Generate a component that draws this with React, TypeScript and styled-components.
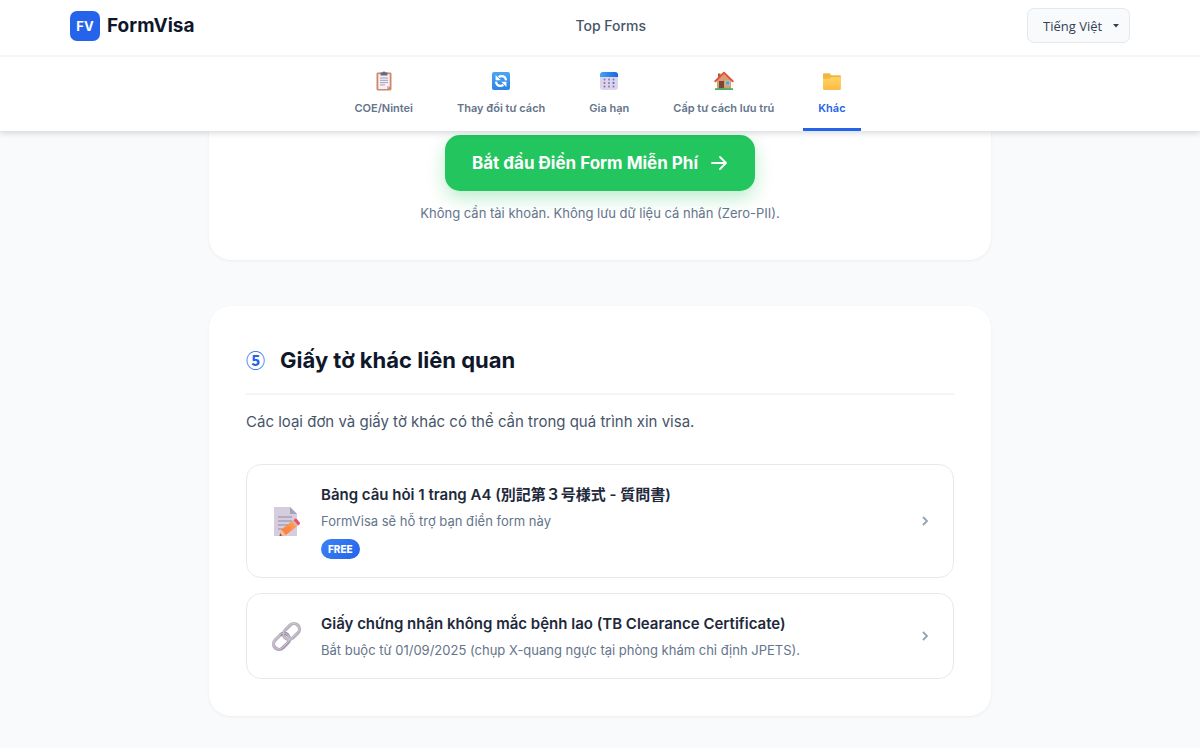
import React from "react";
import styled, { createGlobalStyle } from "styled-components";

const GlobalStyle = createGlobalStyle`
  *, *::before, *::after { box-sizing: border-box; }
  body {
    margin: 0;
    background: #f8fafc;
    color: #1e293b;
    font-family: Inter, "Noto Sans CJK JP", sans-serif;
    overflow-x: hidden;
  }
  h2, h3, p { margin: 0; }
`;

const Header = styled.header`
  position: relative;
  z-index: 2;
  background: #fff;
  box-shadow: 0 2px 6px rgba(15, 23, 42, 0.16);
`;

const TopBar = styled.div`
  border-bottom: 2px solid #f5f6f8;
`;

const TopInner = styled.div`
  display: flex;
  align-items: center;
  justify-content: space-between;
  max-width: 1060px;
  height: 55px;
  padding-bottom: 4px;
  margin: 0 auto;
`;

const Brand = styled.a`
  display: flex;
  align-items: center;
  gap: 7px;
  color: #0f172a;
  font-size: 19px;
  font-weight: 700;
  text-decoration: none;
`;

const Logo = styled.span`
  display: grid;
  place-items: center;
  width: 30px;
  height: 30px;
  border-radius: 7px;
  background: #2563eb;
  color: #fff;
  font-size: 13px;
`;

const TopLink = styled.a`
  color: #475569;
  font-size: 14px;
  font-weight: 500;
  text-decoration: none;
`;

const SelectWrap = styled.label`
  display: grid;
  align-items: center;
  width: 103px;
  height: 35px;
  border: 1px solid #e2e8f0;
  border-radius: 7px;
  background: #f8fafc;

  & > * { grid-area: 1 / 1; }
  & > svg { justify-self: end; margin-right: 10px; pointer-events: none; }
`;

const Select = styled.select`
  appearance: none;
  width: 100%;
  height: 100%;
  padding: 0 24px 0 15px;
  border: 0;
  background: transparent;
  color: #334155;
  font: 400 13px "Open Sans", sans-serif;
`;

const Tabs = styled.nav`
  display: flex;
  justify-content: center;
  gap: 14px;
  height: 74px;
`;

const Tab = styled.a<{ $active?: boolean }>`
  display: flex;
  flex-direction: column;
  align-items: center;
  gap: 10px;
  padding: 14px 15px 0;
  border-bottom: 3px solid ${(p) => (p.$active ? "#2563eb" : "transparent")};
  color: ${(p) => (p.$active ? "#2563eb" : "#64748b")};
  font-size: 11px;
  font-weight: 600;
  line-height: 14px;
  text-decoration: none;
  white-space: nowrap;
`;

const Main = styled.main`
  display: flex;
  flex-direction: column;
  gap: 46px;
  max-width: 782px;
  margin: 0 auto;
  padding-bottom: 32px;
`;

const Card = styled.section`
  padding: 38px 37px 37px;
  border-radius: 22px;
  background: #fff;
  box-shadow: 0 1px 3px rgba(15, 23, 42, 0.06);
`;

const StartCard = styled(Card)`
  display: flex;
  flex-direction: column;
  align-items: center;
  gap: 12px;
  padding-top: 4px;
  border-top-left-radius: 0;
  border-top-right-radius: 0;
`;

const StartButton = styled.button`
  display: flex;
  align-items: center;
  justify-content: center;
  gap: 12px;
  height: 56px;
  padding: 0 27px;
  border: 0;
  border-radius: 15px;
  background: #22c55e;
  box-shadow: 0 7px 18px rgba(34, 197, 94, 0.3);
  color: #fff;
  font: 700 17px Inter, sans-serif;
`;

const Note = styled.p`
  color: #64748b;
  font-size: 13px;
  line-height: 20px;
`;

const CardHead = styled.div`
  display: flex;
  align-items: center;
  gap: 15px;
  height: 51px;
  padding-bottom: 17px;
  border-bottom: 2px solid #f1f5f9;
`;

const Numeral = styled.span`
  color: #2563eb;
  font: 700 19px/34px "Noto Sans CJK JP", sans-serif;
`;

const Title = styled.h2`
  color: #0f172a;
  font-size: 22px;
  font-weight: 700;
  line-height: 34px;
`;

const Intro = styled.p`
  margin: 15px 0 30px;
  color: #475569;
  font-size: 15px;
  line-height: 24px;
`;

const List = styled.div`
  display: flex;
  flex-direction: column;
  gap: 15px;
`;

const Item = styled.a`
  display: flex;
  align-items: center;
  gap: 17px;
  padding: 18px 22px;
  border: 1px solid #e5e9ef;
  border-radius: 15px;
  color: inherit;
  text-decoration: none;
`;

const ItemBody = styled.div`
  display: flex;
  flex: 1;
  flex-direction: column;
  align-items: flex-start;
  gap: 4px;
`;

const ItemTitle = styled.h3`
  color: #1e293b;
  font-size: 15px;
  font-weight: 600;
  line-height: 24px;
`;

const ItemText = styled.p`
  color: #64748b;
  font-size: 13px;
  line-height: 20px;
`;

const Badge = styled.span`
  margin-top: 4px;
  padding: 0 7px;
  border-radius: 10px;
  background: linear-gradient(135deg, #3b82f6, #2563eb);
  color: #fff;
  font-size: 10px;
  font-weight: 800;
  line-height: 20px;
`;

const ClipboardIcon = () => (
  <svg width="20" height="20" viewBox="0 0 20 20" aria-hidden="true">
    <rect x="2.5" y="1.5" width="15" height="18" rx="1.4" fill="#cf8a62" />
    <path d="M4.3 3h11.4v12.2L13 18H4.3z" fill="#f4effa" />
    <path d="M13 18v-2.8h2.7z" fill="#c3b3d6" />
    <path d="M6.5 1.5h2a1.6 1.6 0 0 1 3 0h2v3h-7z" fill="#6d6578" />
    <path d="M6 7h8M6 9.3h8M6 11.6h8M6 13.9h5" stroke="#9d94ad" strokeWidth="0.9" />
  </svg>
);

const RefreshIcon = () => (
  <svg width="20" height="20" viewBox="0 0 20 20" aria-hidden="true">
    <defs>
      <linearGradient id="refresh" x1="0" y1="0" x2="0" y2="1">
        <stop stopColor="#4ba6f2" /><stop offset="1" stopColor="#2f83e4" />
      </linearGradient>
    </defs>
    <rect x="1" y="1" width="18" height="18" rx="2" fill="url(#refresh)" />
    <path d="M15 9.400c-.3-2.600-2-4.300-4.400-4.300-1.200 0-2.200.4-3 1.100M5 10.600c.3 2.600 2 4.300 4.400 4.300 1.200 0 2.200-.4 3-1.100" fill="none" stroke="#fff" strokeWidth="2.200" />
    <path d="M4.600 4v5.200h5.200zM15.400 16v-5.200h-5.200z" fill="#fff" />
  </svg>
);

const CalendarIcon = () => (
  <svg width="20" height="20" viewBox="0 0 20 20" aria-hidden="true">
    <defs>
      <linearGradient id="calendar">
        <stop stopColor="#3fa5f5" /><stop offset="1" stopColor="#1767dc" />
      </linearGradient>
    </defs>
    <rect x="1" y="1.5" width="18" height="17.5" rx="3" fill="#ddd3ec" />
    <path d="M1 6V4a3 3 0 0 1 3-3h12a3 3 0 0 1 3 3v2z" fill="url(#calendar)" />
    {[8.5, 12, 15.5].map((y) =>
      [5.5, 10, 14.5].map((x) => (
        <rect key={`${x}-${y}`} x={x - 0.9} y={y - 0.9} width="1.8" height="1.8" rx="0.4" fill={x === 14.5 && y === 12 ? "#1c83ee" : "#8c7fa3"} />
      ))
    )}
  </svg>
);

const HouseIcon = () => (
  <svg width="20" height="20" viewBox="0 0 20 20" aria-hidden="true">
    <path d="M4 2.5h2.5V7H4z" fill="#a75b45" />
    <path d="M3 9.5 10 3l7 6.5V18H3z" fill="#d5a06f" />
    <path d="M1.3 10.2 10 1.8l8.7 8.4" fill="none" stroke="#e2523f" strokeWidth="2" strokeLinecap="round" strokeLinejoin="round" />
    <rect x="5" y="10" width="5" height="7.5" fill="#7c4639" />
    <rect x="11.8" y="10" width="4" height="4" fill="#49a7dc" stroke="#f1d5b6" strokeWidth="0.5" />
    <path d="M1 17.2h18V19H1z" fill="#45b36a" />
  </svg>
);

const FolderIcon = () => (
  <svg width="20" height="20" viewBox="0 0 20 20" aria-hidden="true">
    <defs>
      <linearGradient id="folder" x1="0" y1="0" x2="0" y2="1">
        <stop stopColor="#ffd65c" /><stop offset="1" stopColor="#fdb94a" />
      </linearGradient>
    </defs>
    <path d="M1 3.3c0-.7.4-1.1 1.1-1.1h5.2c1 0 1.4 2.1 2.5 2.1h8c.7 0 1.1.4 1.1 1.1V10H1z" fill="#f5b545" />
    <path d="M1 8c2-.1 5.4.1 6.8-.7C9 6.600 9.700 6.200 11 6.200h7.900v11.500c0 .8-.4 1.200-1.200 1.200H2.200C1.400 18.900 1 18.500 1 17.700z" fill="url(#folder)" />
  </svg>
);

const MemoIcon = () => (
  <svg width="35" height="35" viewBox="0 0 35 35" aria-hidden="true">
    <defs>
      <linearGradient id="pencil" x1="0" y1="1" x2="1" y2="0">
        <stop stopColor="#ff6f3c" /><stop offset="1" stopColor="#ffa64a" />
      </linearGradient>
    </defs>
    <path d="M5 3h16l7 7v22H5z" fill="#d5cddd" />
    <path d="M21 3v7h7z" fill="#aaa0b8" />
    <path d="M9 13h14M9 17h14M9 21h11M9 25h7" stroke="#9289a0" strokeWidth="1.1" />
    <path d="m10.500 32 2-6.400L23 17.300l4.600 5.300-10.700 8.300z" fill="url(#pencil)" />
    <path d="m10.500 32 2-6.400 4.400 5.300z" fill="#f5bd93" />
    <path d="m10.500 32 .8-2.500 1.600 1.900z" fill="#56445f" />
    <path d="m23 17.300 1.500-1.200 4.600 5.300-1.500 1.200z" fill="#c4bace" />
    <path d="m24.500 16.100 1.400-1.100c.7-.6 1.300-.5 1.900.1l3 3.500c.4.600.4 1.200-.2 1.700l-1.500 1.100z" fill="#ef4f60" />
  </svg>
);

const LinkIcon = () => (
  <svg width="35" height="35" viewBox="0 0 35 35" aria-hidden="true">
    <defs>
      <linearGradient id="chain" x1="0" y1="0" x2="0" y2="1">
        <stop stopColor="#bdb5bf" /><stop offset="1" stopColor="#a99bb6" />
      </linearGradient>
    </defs>
    <g fill="none" transform="rotate(-45 17.500 17.500)">
      <rect x="1.500" y="12" width="18" height="11" rx="5.500" stroke="url(#chain)" strokeWidth="3.400" />
      <rect x="15.500" y="12" width="18" height="11" rx="5.500" stroke="#b8afbd" strokeWidth="3.400" />
      <path d="M14 12.200c3.200 0 5.500 2.200 5.500 5.300" stroke="#9c8fa8" strokeWidth="3.400" />
      <rect x="1.500" y="11.500" width="18" height="11" rx="5.500" stroke="#d5ced8" strokeWidth="0.800" />
      <rect x="15.500" y="11.500" width="18" height="11" rx="5.500" stroke="#d5ced8" strokeWidth="0.800" />
    </g>
  </svg>
);

const Chevron = () => (
  <svg width="12" height="12" viewBox="0 0 12 12" aria-hidden="true">
    <path d="m4 2 4 4-4 4" fill="none" stroke="#94a3b8" strokeWidth="1.800" />
  </svg>
);

const tabs = [
  { label: "COE/Nintei", icon: <ClipboardIcon /> },
  { label: "Thay đổi tư cách", icon: <RefreshIcon /> },
  { label: "Gia hạn", icon: <CalendarIcon /> },
  { label: "Cấp tư cách lưu trú", icon: <HouseIcon /> },
  { label: "Khác", icon: <FolderIcon />, active: true },
];

const items = [
  {
    title: "Bảng câu hỏi 1 trang A4 (別記第３号様式 - 質問書)",
    text: "FormVisa sẽ hỗ trợ bạn điền form này",
    icon: <MemoIcon />,
    badge: "FREE",
  },
  {
    title: "Giấy chứng nhận không mắc bệnh lao (TB Clearance Certificate)",
    text: "Bắt buộc từ 01/09/2025 (chụp X-quang ngực tại phòng khám chỉ định JPETS).",
    icon: <LinkIcon />,
  },
];

export default function App() {
  return (
    <>
      <GlobalStyle />
      <Header>
        <TopBar>
          <TopInner>
            <Brand href="#">
              <Logo>FV</Logo>
              FormVisa
            </Brand>
            <TopLink href="#">Top Forms</TopLink>
            <SelectWrap>
              <Select aria-label="Ngôn ngữ" defaultValue="vi">
                <option value="vi">Tiếng Việt</option>
              </Select>
              <svg width="6" height="4" viewBox="0 0 6 4" aria-hidden="true">
                <path d="M0 0h6L3 3.500z" fill="#334155" />
              </svg>
            </SelectWrap>
          </TopInner>
        </TopBar>
        <Tabs>
          {tabs.map((tab) => (
            <Tab key={tab.label} href="#" $active={tab.active}>
              {tab.icon}
              {tab.label}
            </Tab>
          ))}
        </Tabs>
      </Header>
      <Main>
        <StartCard>
          <StartButton type="button">
            Bắt đầu Điền Form Miễn Phí
            <svg width="18" height="18" viewBox="0 0 18 18" aria-hidden="true">
              <path d="M2 9h14M10 3l6 6-6 6" fill="none" stroke="#fff" strokeWidth="1.800" strokeLinecap="round" strokeLinejoin="round" />
            </svg>
          </StartButton>
          <Note>Không cần tài khoản. Không lưu dữ liệu cá nhân (Zero-PII).</Note>
        </StartCard>
        <Card>
          <CardHead>
            <Numeral>⑤</Numeral>
            <Title>Giấy tờ khác liên quan</Title>
          </CardHead>
          <Intro>Các loại đơn và giấy tờ khác có thể cần trong quá trình xin visa.</Intro>
          <List>
            {items.map((item) => (
              <Item key={item.title} href="#">
                {item.icon}
                <ItemBody>
                  <ItemTitle>{item.title}</ItemTitle>
                  <ItemText>{item.text}</ItemText>
                  {item.badge && <Badge>{item.badge}</Badge>}
                </ItemBody>
                <Chevron />
              </Item>
            ))}
          </List>
        </Card>
      </Main>
    </>
  );
}
